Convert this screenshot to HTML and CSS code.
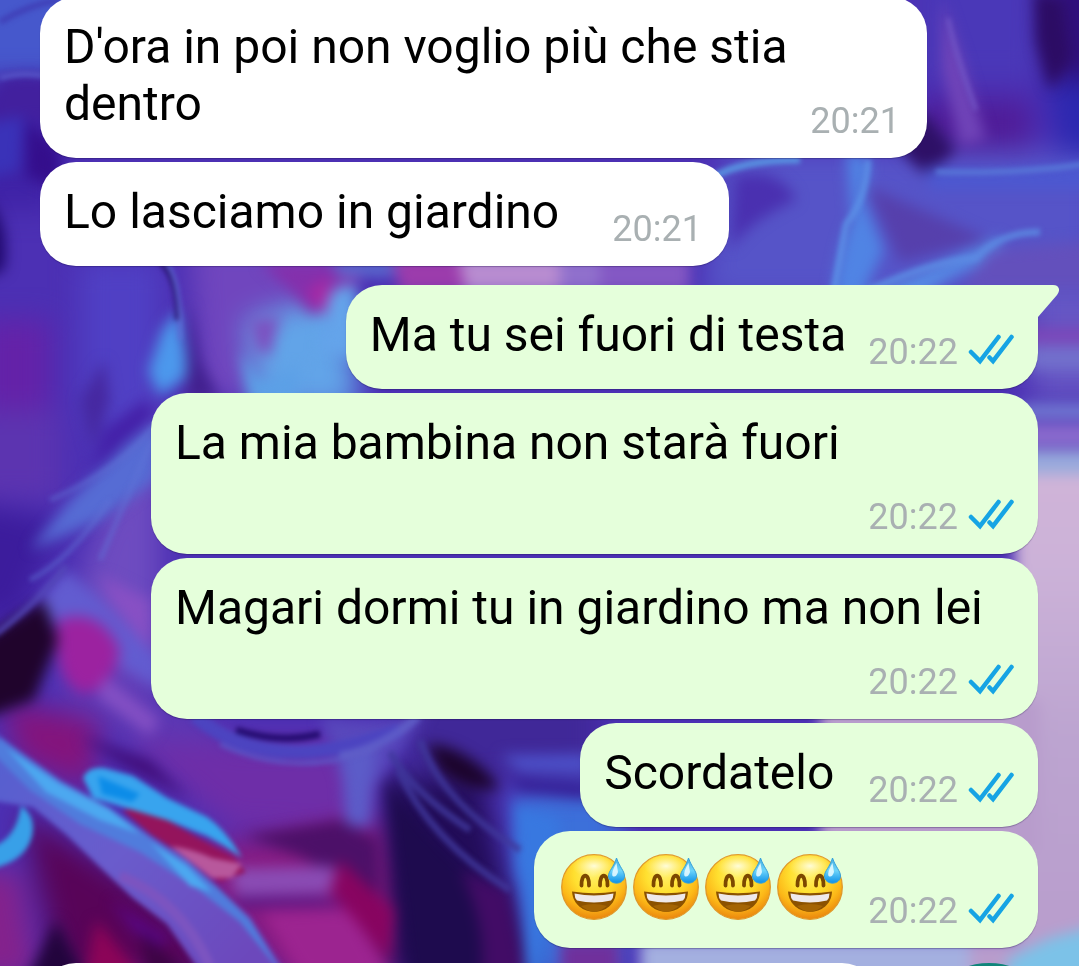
FILE: index.html
```html
<!DOCTYPE html>
<html lang="it">
<head>
<meta charset="utf-8">
<meta name="viewport" content="width=device-width, initial-scale=1">
<title>Chat</title>
<link rel="stylesheet" href="styles.css">
</head>
<body>
<div class="screen">
  <svg class="wallpaper" viewBox="0 0 1079 966" preserveAspectRatio="none" aria-hidden="true">
    <defs>
      <filter id="soft" filterUnits="userSpaceOnUse" x="-100" y="-100" width="1279" height="1166" color-interpolation-filters="sRGB"><feGaussianBlur stdDeviation="14"/></filter>
      <filter id="mid" filterUnits="userSpaceOnUse" x="-100" y="-100" width="1279" height="1166" color-interpolation-filters="sRGB"><feGaussianBlur stdDeviation="7"/></filter>
      <filter id="fine" filterUnits="userSpaceOnUse" x="-100" y="-100" width="1279" height="1166" color-interpolation-filters="sRGB"><feGaussianBlur stdDeviation="2.5"/></filter>
      <linearGradient id="side" x1="0" y1="460" x2="0" y2="966" gradientUnits="userSpaceOnUse">
        <stop offset="0" stop-color="#d0b4d8"/><stop offset=".2" stop-color="#ccb2d8"/><stop offset=".55" stop-color="#bca4d0"/><stop offset="1" stop-color="#b89ccc"/>
      </linearGradient>
      <linearGradient id="petal" x1="0" y1="740" x2="240" y2="966" gradientUnits="userSpaceOnUse">
        <stop offset="0" stop-color="#5460d0"/><stop offset=".5" stop-color="#6a5ccc"/><stop offset="1" stop-color="#6c48bc"/>
      </linearGradient>
    </defs>
    <rect width="1079" height="966" fill="#4c30b4"/>
    <g filter="url(#soft)">
      <path d="M-60-60H120V78H-60Z" fill="#4658cc"/>
      <path d="M-60 90H60V210H-60Z" fill="#3f22a6"/>
      <path d="M80 260H160V400L110 470L80 400Z" fill="#5040c4"/>
      <path d="M-20 320H50V420H-20Z" fill="#6422a8"/>
      <path d="M190 240H330V400H200Z" fill="#7046be"/>
      <path d="M245 320L345 290L360 410H260Z" fill="#62a4e8"/>
      <path d="M-40 410H60V500H-40Z" fill="#5c34b0"/>
      <path d="M160 400V760L60 640L100 520Z" fill="#6e4cc0"/>
      <path d="M-40 500L60 520L20 620H-40Z" fill="#3c1c9c"/>
      <path d="M0 700L100 720L90 790L20 760Z" fill="#84147c"/>
      <path d="M60 640L180 700L260 760L160 760L60 700Z" fill="#5c38b4"/>
      <path d="M120 740H370V830H230Z" fill="#6e2ea8"/>
      <path d="M180 850L380 820L400 980H280Z" fill="#881a80"/>
      <path d="M20 810L160 900L240 980H60Z" fill="#580458"/>
      <path d="M-40 870H20L40 980H-40Z" fill="#84228c"/>
      <path d="M385 770H480L530 980H390Z" fill="#220c58"/>
      <path d="M400 690H600V780H400Z" fill="#402898"/>
      <path d="M515 790H620V980H530Z" fill="#3c70da"/>
      <path d="M725 150H1100V300H700Z" fill="#5654c8"/>
      <path d="M920-40H1040V80H920Z" fill="#4a38b8"/>
      <path d="M1040-40H1110V90L1050 80Z" fill="#30107c"/>
      <path d="M920 100H1030V150H920Z" fill="#501c98"/>
      <path d="M1045 80H1110V155H1060Z" fill="#2c28b0"/>
      <path d="M1030 290H1110V400H1030Z" fill="#6656c4"/>
    </g>
    <g filter="url(#mid)">
      <path d="M1015 462H1110V1000H970V940H1015Z" fill="url(#side)"/>
      <path d="M640 940H970V985H640Z" fill="#a4b0e0"/>
      <path d="M820 700H1040V850H820Z" fill="#b89ccc"/>
      <path d="M560 940H620V980H560Z" fill="#70309c"/>
      <path d="M1010 450H1100V474H1010Z" fill="#98aadc"/>
      <path d="M1010 424H1100V446H1010Z" fill="#8c6cce"/>
      <path d="M1020 404H1100V418H1020Z" fill="#7480d4"/>
      <path d="M1020 328H1100V344H1020Z" fill="#7c46b8"/>
      <path d="M1030 346H1100V370H1030Z" fill="#7270cc"/>
      <path d="M1000 985L1010 958L1050 938L1100 925V985Z" fill="#7cc2e8"/>
      <path d="M0 78Q30 70 60 80V120H-20Z" fill="#42209e"/>
      <path d="M-20 124L24 116L20 170L-20 180Z" fill="#3a32b8"/>
      <path d="M26 120L60 150V190L26 176Z" fill="#340e8c"/>
      <path d="M-18 195Q12 220 4 270L-20 280Z" fill="#20086c"/>
      <path d="M178 310L190 375L160 396L148 372L162 330Z" fill="#4c98ec"/>
      <path d="M188 300L200 360L220 400H186Z" fill="#42208e"/>
      <path d="M260 262H360V280L312 316L290 290Z" fill="#8430ac"/>
      <path d="M306 292L330 276L326 316Z" fill="#aa28a4"/>
      <path d="M330 262H394V276H340Z" fill="#5c70d0"/>
      <path d="M392 256H462L466 292H400Z" fill="#9c3cac"/>
      <path d="M458 256H570V292H466Z" fill="#b88cd0"/>
      <path d="M560 256H600V292H560Z" fill="#9070cc"/>
      <path d="M600 256H690V292H600Z" fill="#8458c4"/>
      <path d="M326 320Q324 280 356 286L352 360L318 350Z" fill="#64a4ea"/>
      <path d="M240 350L262 380L300 366L296 402H250Z" fill="#5ca0e6"/>
      <path d="M250 320L280 316L270 356L256 350Z" fill="#7c50c0"/>
      <path d="M144 400L104 430L90 474L120 454L156 412Z" fill="#4420a8"/>
      <path d="M104 360L80 400L92 450L110 400Z" fill="#4628a0"/>
      <path d="M160 420L130 440L70 500L30 550L100 520L156 480Z" fill="#566cd4"/>
      <path d="M66 570L40 600L50 620L160 690V660L90 590Z" fill="#625cd0"/>
      <path d="M100 575L150 600V650L110 600Z" fill="#8850c4"/>
      <path d="M58 620Q100 606 120 650Q112 690 82 694Q56 680 58 640Z" fill="#9c22a0"/>
      <path d="M-20 640L44 600L58 640L34 700L-20 720Z" fill="#20042c"/>
      <path d="M106 676L160 720L150 736L96 696Z" fill="#8450c4"/>
      <path d="M80 736L150 760L190 800L120 764Z" fill="#400c78"/>
      <path d="M426 744Q466 744 500 788Q470 794 440 772Z" fill="#1c042c"/>
      <path d="M386 776Q440 860 510 900L500 980H410Z" fill="#1e0b4e"/>
      <path d="M500 755L590 754V774L520 772Z" fill="#4c50c8"/>
      <path d="M510 778L590 784V798L520 790Z" fill="#341890"/>
      <path d="M514 800L560 820L540 980H526Q530 900 516 870Z" fill="#3878e0"/>
      <path d="M460 870L508 890L528 985H480Q490 930 460 870Z" fill="#420c66"/>
      <path d="M320 716Q400 730 430 706L380 780L350 800Z" fill="#5848bc"/>
      <path d="M340 750L376 740L370 826L346 826Z" fill="#5c5cc8"/>
      <path d="M244 836L340 820L378 840L380 900L300 856Z" fill="#4c1068"/>
      <path d="M230 868L330 866L370 892L236 896Z" fill="#8a4cb4"/>
      <path d="M230 896L320 896L350 906L240 908Z" fill="#5c1884"/>
      <path d="M262 912L350 910L390 976H300Z" fill="#9c2490"/>
      <path d="M340 860L394 910L388 960L330 890Z" fill="#880460"/>
      <path d="M56 920L90 985H24Z" fill="#22043c"/>
      <path d="M96 920L145 980H84Z" fill="#8c0458"/>
      <path d="M110 900L170 940L150 950Z" fill="#58088c"/>
      <path d="M140 930L200 985H150Z" fill="#3c0444"/>
      <path d="M922 110L956 150L926 176L900 150Z" fill="#2e1066"/>
      <path d="M942 0L962 60L986 140L960 146L942 70Z" fill="#7044b8"/>
      <path d="M1035-10L1064 0L1072 60L1050 90L1036 40Z" fill="#2c0c64"/>
      <path d="M925 166Q1000 176 1100 160V190H930Z" fill="#4c58d0"/>
      <path d="M735 176Q780 166 796 200Q750 220 730 250Z" fill="#4a30b0"/>
      <path d="M866 186Q900 200 990 240L900 262Z" fill="#5640ac"/>
      <path d="M846 150L870 160L864 200L884 250L860 300H832Q840 240 852 220Z" fill="#5084e4"/>
      <path d="M850 300Q930 270 1000 236V256Q940 280 920 300Z" fill="#568ae4"/>
      <path d="M990 250L1100 240V290H960Z" fill="#6350bc"/>
    </g>
    <g filter="url(#fine)">
      <path d="M160 262Q178 280 177 320" fill="none" stroke="#26106c" stroke-width="4"/>
      <path d="M166 262Q182 284 180 340" fill="none" stroke="#6070d8" stroke-width="3"/>
      <path d="M0 22Q30 4 60 0" fill="none" stroke="#4040b8" stroke-width="6"/>
      <path d="M0 78Q24 71 50 77" fill="none" stroke="#5a5ccc" stroke-width="4"/>
      <path d="M236 730Q280 744 320 734" fill="none" stroke="#240c70" stroke-width="7"/>
      <path d="M195 716Q270 780 400 730" fill="none" stroke="#4c44c0" stroke-width="14"/>
      <path d="M220 744Q290 778 366 752" fill="none" stroke="#5c54c4" stroke-width="4"/>
      <path d="M-12 728L10 744L60 780L110 808L150 836L187 860L217 887L250 917L290 980H206L167 924L133 898L100 867L67 835L33 807L-12 800Z" fill="url(#petal)"/>
      <path d="M0 738L10 746L60 781L110 808L150 838L187 862L217 887L250 920L284 976L240 922L196 888L140 852L80 824L30 790L-10 750Z" fill="#507cdc"/>
      <path d="M6 748L60 784L110 810L140 834L100 820L46 792Z" fill="#4ca8f0"/>
      <path d="M150 842L187 866L212 892L190 886Z" fill="#4ca8f0"/>
      <path d="M120 876Q180 900 210 966" fill="none" stroke="#7c54c0" stroke-width="10"/>
      <path d="M122 810L146 808L206 842L234 858L246 872L220 882L190 860L150 834Z" fill="#94145c"/>
      <path d="M170 846Q190 848 212 858L242 864L232 878L212 878Z" fill="#b8589c"/>
      <path d="M83 778Q88 766 104 768L133 776L167 798L207 817Q226 830 242 858Q226 846 207 836L167 820L123 807L93 798Z" fill="#38a4ee"/>
      <path d="M98 776L140 794L132 802L102 794Z" fill="#0c8ce8"/>
      <path d="M21 806Q36 816 32 836Q26 860-6 868V846Q16 838 21 806Z" fill="#38a0e8"/>
      <path d="M398 770Q430 840 510 890M420 740Q440 800 520 850M390 752Q410 790 470 830" fill="none" stroke="#40389c" stroke-width="7" opacity=".8"/>
      <path d="M340 756Q384 748 418 716" fill="none" stroke="#6060c8" stroke-width="9" opacity=".8"/>
      <path d="M948 18Q954 50 976 110" fill="none" stroke="#7860cc" stroke-width="4" opacity=".7"/>
      <path d="M936 172Q1020 174 1085 164" fill="none" stroke="#5878d8" stroke-width="5"/>
      <path d="M868 160Q866 200 846 224L834 290" fill="none" stroke="#5c94e8" stroke-width="6" opacity=".8"/>
      <path d="M870 290Q930 262 976 258Q1000 232 1040 232" fill="none" stroke="#5c8ce4" stroke-width="7" opacity=".8"/>
      <path d="M712 178Q740 160 800 160" fill="none" stroke="#5890e0" stroke-width="7"/>
      <path d="M50 500Q120 470 156 424M30 580Q70 560 110 500M100 560L152 440" fill="none" stroke="#6074d8" stroke-width="5" opacity=".5"/>
      <path d="M-4 634Q40 600 66 566" fill="none" stroke="#5448b8" stroke-width="6" opacity=".8"/>
    </g>
  </svg>

  <svg class="defs" aria-hidden="true">
    <defs>
      <radialGradient id="face" cx=".48" cy=".3" r=".72">
        <stop offset="0" stop-color="#fff06a"/><stop offset=".4" stop-color="#ffe030"/><stop offset=".72" stop-color="#fcb818"/><stop offset="1" stop-color="#e8800c"/>
      </radialGradient>
      <radialGradient id="shine" cx=".5" cy=".5" r=".5">
        <stop offset="0" stop-color="#fffde0" stop-opacity=".95"/><stop offset="1" stop-color="#fff6a0" stop-opacity="0"/>
      </radialGradient>
      <linearGradient id="drop" x1="0" y1="0" x2="0" y2="1">
        <stop offset="0" stop-color="#48b0e0"/><stop offset=".5" stop-color="#6cd4fa"/><stop offset="1" stop-color="#0c90e8"/>
      </linearGradient>
      <symbol id="sweat" viewBox="0 0 72 70">
        <circle cx="36" cy="35" r="32.3" fill="url(#face)" stroke="#e09828" stroke-width="1.300"/>
        <ellipse cx="36" cy="14" rx="22" ry="12" fill="url(#shine)"/>
        <path d="M23.500 33.500C23 20.500 31.500 20.500 31 33.500M42 33.500C41.500 20.500 50 20.500 49.500 33.500" fill="none" stroke="#7c4800" stroke-width="3.800" stroke-linecap="round"/>
        <path d="M14 39.500Q36 43 58 39.500C57 66.500 16 66.500 14 39.500Z" fill="#8c5200"/>
        <path d="M23 54Q36 50 49 54Q36 65 23 54Z" fill="#a46404"/>
        <path d="M16.500 41.500Q36 45.500 55.500 41.500Q55.500 46 53 48.500Q36 52.500 19 48.500Q16.500 46 16.500 41.500Z" fill="#efe9ea"/>
        <path d="M58.500 6C56 15 50.500 19 50.500 24C50.500 33.500 66.500 33.500 66.500 24C66.500 19 61.500 15 58.500 6Z" fill="url(#drop)" stroke="#34a0dc" stroke-width="1"/>
        <path d="M58.500 11Q53 20 54.500 24Q58 26 60 20Z" fill="#e4faff" opacity=".9"/>
      </symbol>
      <symbol id="ticks" viewBox="0 0 46 32">
        <path d="M3 19L12 28L30.500 4M21.500 24.500L25 28L43.500 4" fill="none" stroke="#16a4e4" stroke-width="4.500" stroke-linecap="round"/>
      </symbol>
    </defs>
  </svg>

  <main class="chat">
    <article class="bubble in full">
      <p class="text">D'ora in poi non voglio più che stia dentro</p>
      <div class="meta"><time>20:21</time></div>
    </article>
    <article class="bubble in roomy">
      <p class="text">Lo lasciamo in giardino</p>
      <div class="meta"><time>20:21</time></div>
    </article>
    <article class="bubble out first">
      <svg class="tail" viewBox="0 0 24 34" aria-hidden="true"><path d="M0 0H18C24 0 26 5 22 10L3 32V34H0Z" fill="#e5ffdb"/></svg>
      <p class="text">Ma tu sei fuori di testa</p>
      <div class="meta"><time>20:22</time><svg class="ticks" role="img" aria-label="Letto"><use href="#ticks"/></svg></div>
    </article>
    <article class="bubble out full stacked">
      <p class="text">La mia bambina non starà fuori</p>
      <div class="meta"><time>20:22</time><svg class="ticks" role="img" aria-label="Letto"><use href="#ticks"/></svg></div>
    </article>
    <article class="bubble out full stacked">
      <p class="text">Magari dormi tu in giardino ma non lei</p>
      <div class="meta"><time>20:22</time><svg class="ticks" role="img" aria-label="Letto"><use href="#ticks"/></svg></div>
    </article>
    <article class="bubble out short">
      <p class="text">Scordatelo</p>
      <div class="meta"><time>20:22</time><svg class="ticks" role="img" aria-label="Letto"><use href="#ticks"/></svg></div>
    </article>
    <article class="bubble out">
      <p class="text emoji">
        <svg role="img" aria-label="😅"><use href="#sweat"/></svg>
        <svg role="img" aria-label="😅"><use href="#sweat"/></svg>
        <svg role="img" aria-label="😅"><use href="#sweat"/></svg>
        <svg role="img" aria-label="😅"><use href="#sweat"/></svg>
      </p>
      <div class="meta"><time>20:22</time><svg class="ticks" role="img" aria-label="Letto"><use href="#ticks"/></svg></div>
    </article>
    <article class="bubble in next"></article>
  </main>
  <button class="mic" type="button" aria-label="Messaggio vocale"></button>
</div>
</body>
</html>
```

FILE: styles.css
```css
* {
  box-sizing: border-box;
}

body {
  margin: 0;
  font-family: Roboto, "Liberation Sans", sans-serif;
}

.screen {
  position: relative;
  z-index: 0;
  height: 100vh;
  overflow: hidden;
  background: #4c30b4;
}

.wallpaper {
  position: absolute;
  inset: 0;
  z-index: -1;
  width: 100%;
  height: 100%;
}

.defs {
  position: absolute;
  width: 0;
  height: 0;
}

.chat {
  display: flex;
  flex-direction: column;
  gap: 4px;
  margin-top: -3px;
  padding: 0 41px 0 40px;
}

.bubble {
  position: relative;
  display: flex;
  align-items: flex-end;
  justify-content: space-between;
  gap: 22px;
  max-width: calc(100% - 111px);
  padding: 21px 24px 16px;
  border-radius: 36px;
  box-shadow: 0 1px 1px rgba(20, 10, 60, 0.3);
}

.in {
  align-self: flex-start;
  padding-right: 27px;
  background: #fff;
}

.out {
  align-self: flex-end;
  background: #e5ffdb;
}

.full {
  width: 100%;
}

.roomy {
  gap: 53px;
}

.short {
  gap: 34px;
}

.first {
  margin-top: 15px;
  border-top-right-radius: 0;
}

.stacked {
  flex-direction: column;
  align-items: stretch;
  gap: 15px;
}

.next {
  width: 84%;
  height: 104px;
  margin-top: 11px;
}

.tail {
  position: absolute;
  top: 0;
  right: -21px;
  width: 24px;
  height: 34px;
}

.text {
  margin: 0 0 10px;
  font-size: 48px;
  line-height: 57px;
  color: #000;
}

.emoji {
  display: flex;
}

.emoji svg {
  width: 72px;
  height: 70px;
}

.meta {
  display: flex;
  align-items: center;
  justify-content: flex-end;
  gap: 10px;
  font-size: 36px;
  line-height: 42px;
  color: #a9b0b2;
}

.ticks {
  width: 46px;
  height: 32px;
  margin-bottom: 6px;
}

.mic {
  position: absolute;
  right: 20px;
  bottom: -137px;
  width: 140px;
  height: 140px;
  padding: 0;
  border: 0;
  border-radius: 50%;
  background: #0f857a;
}
```
